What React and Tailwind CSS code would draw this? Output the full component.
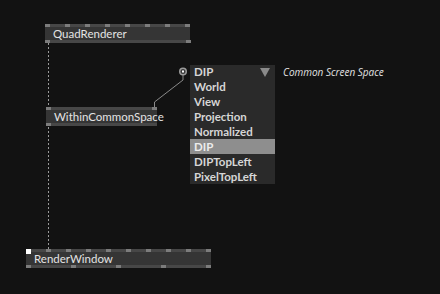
const PinStrip = ({ pins }) => (
  <div className="relative h-[3px] w-full bg-[#474747]">
    {pins.map((p) => (
      <span
        key={p.x}
        className={`absolute top-0 w-[5px] ${p.white ? 'bg-white h-[5px]' : 'bg-[#7c7c7c] h-[3px]'}`}
        style={{ left: p.x }}
      />
    ))}
  </div>
)

const Node = ({ title, className, topPins, bottomPins }) => (
  <div className={`absolute flex flex-col ${className}`}>
    <PinStrip pins={topPins} />
    <div className="h-[13px] bg-[#353535] flex items-center pl-2 font-['Lato','Open_Sans',sans-serif] text-[11.5px] leading-none text-[#e4e4e4]">
      {title}
    </div>
    <PinStrip pins={bottomPins} />
  </div>
)

const every = (count, step) => Array.from({ length: count }, (_, i) => ({ x: i * step }))

const options = ['World', 'View', 'Projection', 'Normalized', 'DIP', 'DIPTopLeft', 'PixelTopLeft']

const App = () => {
  return (
    <div className="relative w-[440px] h-[294px] overflow-hidden bg-[#121212] font-['Open_Sans','Noto_Sans',sans-serif]">
      {/* wires */}
      <svg className="absolute inset-0" width="440" height="294">
        <line x1="48.5" y1="43" x2="48.5" y2="249" stroke="#9a9a9a" strokeWidth="1" strokeDasharray="2 2" />
        <polyline points="154.5,107 154.5,102 183,80 183,75" fill="none" stroke="#8a8a8a" strokeWidth="1" />
        <circle cx="183" cy="71.5" r="4" fill="#9a9a9a" />
        <circle cx="183" cy="71.5" r="2.5" fill="#3a3a3a" />
        <rect x="182" y="70.5" width="2" height="2" fill="#ffffff" />
      </svg>

      <Node
        title="QuadRenderer"
        className="left-[45px] top-[24px] w-[145px]"
        topPins={every(8, 20)}
        bottomPins={[{ x: 0 }, { x: 141 }]}
      />

      <Node
        title="WithinCommonSpace"
        className="left-[46px] top-[107px] w-[111px]"
        topPins={[{ x: 0 }, { x: 106 }]}
        bottomPins={[{ x: 0 }]}
      />

      <Node
        title="RenderWindow"
        className="left-[26px] top-[249px] w-[185px]"
        topPins={[{ x: 0, white: true }, ...every(9, 20).slice(1), { x: 180 }]}
        bottomPins={[{ x: 0 }, { x: 45 }, { x: 90 }, { x: 135 }, { x: 180 }]}
      />

      {/* dropdown */}
      <div className="absolute left-[190px] top-[65px] w-[85px] bg-[#2a2a2a] flex flex-col font-['Lato','Open_Sans',sans-serif] text-[11.5px] font-bold text-[#d6d6d6]">
        <div className="h-[14px] flex items-center justify-between pl-1 pr-[5px]">
          <span>DIP</span>
          <svg width="10" height="10" viewBox="0 0 10 10">
            <polygon points="0,1 10,1 5,10" fill="#8a8a8a" />
          </svg>
        </div>
        {options.map((o) => (
          <div
            key={o}
            className={`h-[15px] flex items-center pl-1 ${o === 'DIP' ? 'bg-[#8e8e8e] text-[#ececec]' : ''}`}
          >
            {o}
          </div>
        ))}
      </div>

      <div className="absolute left-[283px] top-[65px] text-[10px] italic text-[#e2e2e2]">
        Common Screen Space
      </div>
    </div>
  )
}

export default App
